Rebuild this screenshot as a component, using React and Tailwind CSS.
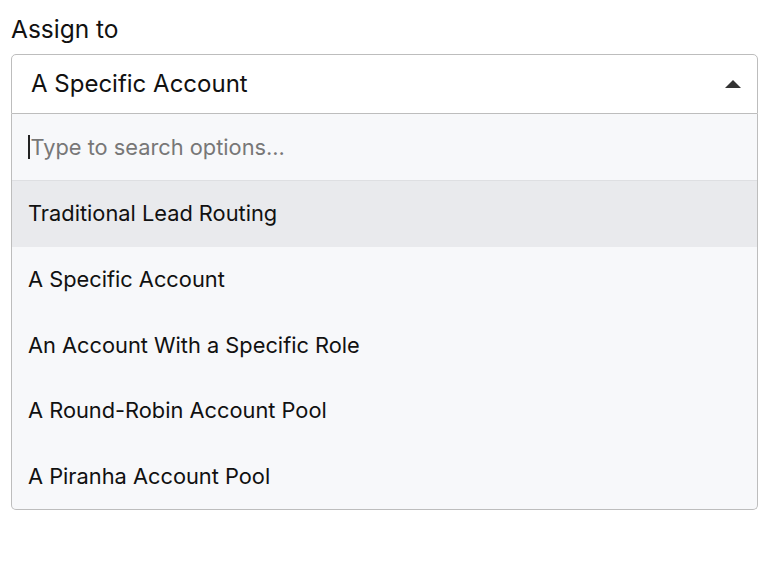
export default function App() {
  const options = [
    "Traditional Lead Routing",
    "A Specific Account",
    "An Account With a Specific Role",
    "A Round-Robin Account Pool",
    "A Piranha Account Pool",
  ];

  return (
    <div className="min-h-[588px] bg-white pl-[11px] pt-[12px] font-['Inter',sans-serif] text-[#111]">
      <div className="w-[747px]">
        <label className="block text-[24.5px] leading-[34px] mb-[8px]">Assign to</label>

        {/* select box */}
        <div className="flex h-[60px] items-center justify-between rounded-t-[5px] border border-[#bdbdbd] bg-white pl-[19px] pr-[16px]">
          <span className="text-[24px]">A Specific Account</span>
          <svg width="16" height="9" viewBox="0 0 16 9">
            <path d="M8 0 L16 8 L0 8 Z" fill="#333" />
          </svg>
        </div>

        {/* dropdown */}
        <div className="rounded-b-[5px] border border-t-0 border-[#bdbdbd] bg-[#f7f8fa]">
          <div className="flex h-[67px] items-center border-b border-[#dedfe2] pl-[16px]">
            <span className="mr-[1px] h-[24px] w-[1.5px] bg-[#222]" />
            <input
              className="flex-1 bg-transparent text-[21.8px] outline-none placeholder:text-[#777]"
              placeholder="Type to search options..."
            />
          </div>
          {options.map((opt, i) => (
            <div
              key={opt}
              className={
                "flex h-[65.6px] items-center pl-[16px] text-[21.8px] " +
                (i === 0 ? "bg-[#e9eaed]" : "")
              }
            >
              {opt}
            </div>
          ))}
        </div>
      </div>
    </div>
  );
}
